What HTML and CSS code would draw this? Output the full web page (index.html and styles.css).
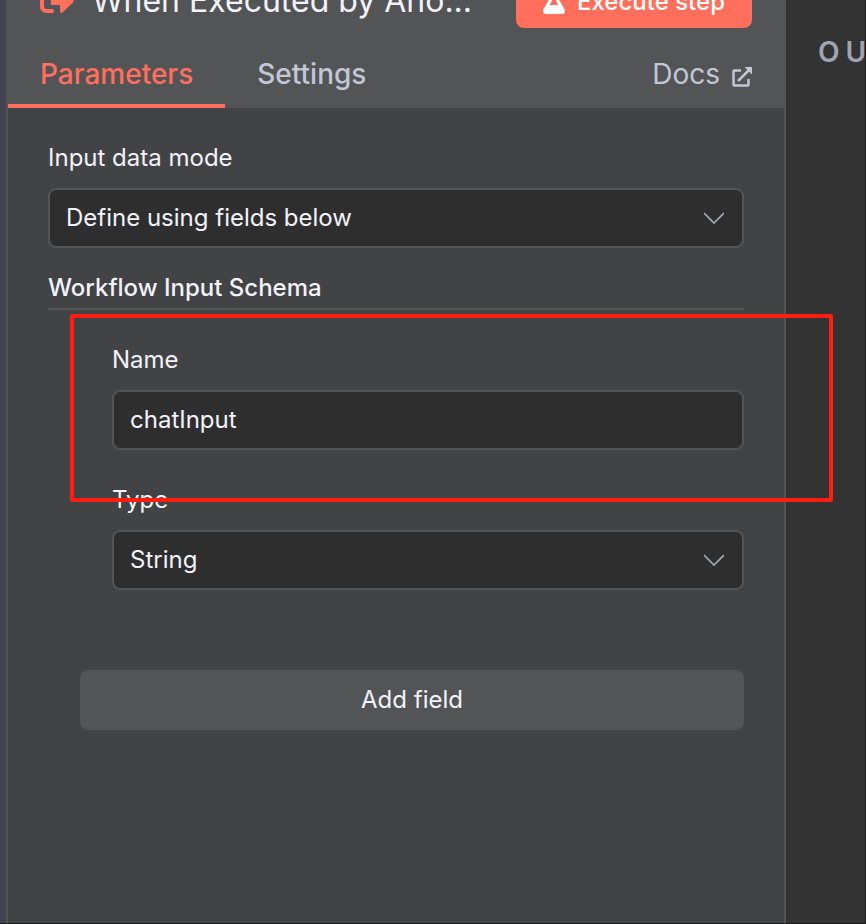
FILE: index.html
```html
<!DOCTYPE html>
<html lang="en">
<head>
    <meta charset="UTF-8">
    <meta name="viewport" content="width=device-width, initial-scale=1.0">
    <title>When Executed by Another Workflow</title>
    <link rel="stylesheet" href="styles.css">
</head>
<body>
    <div class="editor">
        <!-- Node settings -->
        <main class="panel">
            <header class="panel-header">
                <div class="title-row">
                    <svg class="node-icon" viewBox="0 0 34 24" aria-hidden="true">
                        <path d="M12 2H7Q2 2 2 7V17Q2 22 7 22H12" fill="none" stroke="currentColor" stroke-width="4" stroke-linecap="round"/>
                        <path d="M12 7H20V1Q20 -2 22.500 0L33 10.500Q34.500 12 33 13.500L22.500 23.500Q20 25 20 22V16H12Q11 16 11 15V8Q11 7 12 7Z" fill="currentColor"/>
                    </svg>
                    <h1 class="title">When Executed by Ano...</h1>
                    <button class="execute-button" type="button">
                        <svg class="flask-icon" viewBox="0 0 22 26" aria-hidden="true">
                            <path fill="currentColor" fill-rule="evenodd" d="M5 0H17V3H15V10L21.500 21Q23 26 19 26H3Q-1 26 .5 21L7 10V3H5ZM10 10L7 17H15L12 10Z"/>
                        </svg>
                        Execute step
                    </button>
                </div>
                <nav class="tabs">
                    <a class="tab active" href="#parameters">Parameters</a>
                    <a class="tab" href="#settings">Settings</a>
                    <a class="tab docs" href="#docs">Docs
                        <svg class="link-icon" viewBox="0 0 20 20" aria-hidden="true">
                            <path d="M9 3.500H2.500Q1.500 3.500 1.500 4.500V17.500Q1.500 18.500 2.500 18.500H15.500Q16.500 18.500 16.500 17.500V12M6 14L17 3" fill="none" stroke="currentColor" stroke-width="2.500"/>
                            <path d="M12.500 0H20V7.500Z" fill="currentColor"/>
                        </svg>
                    </a>
                </nav>
            </header>

            <form class="parameters" id="parameters">
                <div class="field">
                    <label for="mode">Input data mode</label>
                    <div class="select">
                        <select id="mode">
                            <option>Define using fields below</option>
                        </select>
                        <svg class="chevron" viewBox="0 0 20 12" aria-hidden="true"><path d="M0 1L10 11L20 1"/></svg>
                    </div>
                </div>

                <h2 class="section-title">Workflow Input Schema</h2>

                <div class="schema">
                    <div class="field">
                        <label for="name">Name</label>
                        <input id="name" type="text" value="chatInput">
                    </div>
                    <div class="field">
                        <label for="type">Type</label>
                        <div class="select">
                            <select id="type">
                                <option>String</option>
                            </select>
                            <svg class="chevron" viewBox="0 0 20 12" aria-hidden="true"><path d="M0 1L10 11L20 1"/></svg>
                        </div>
                    </div>
                </div>

                <button class="add-button" type="button">Add field</button>
            </form>
        </main>

        <!-- Output -->
        <aside class="output">
            <h2 class="output-title">OUTPUT</h2>
        </aside>

        <div class="highlight"></div>
    </div>
</body>
</html>
```
FILE: styles.css
```css
/* General Reset */
* {
    margin: 0;
    padding: 0;
    box-sizing: border-box;
}

body {
    background-color: #434250;
    color: #f2f2fa;
    font-family: Inter, "Liberation Sans", sans-serif;
    font-size: 24px;
    line-height: 32px;
}

.editor {
    position: relative;
    display: flex;
    min-height: 100vh;
    padding-left: 6px;
    border-right: 1px solid #1c1c1d;
    border-bottom: 1px solid #1c1c1d;
    overflow: hidden;
}

/* Panel */
.panel {
    flex: 1;
    min-width: 0;
    background: #424345;
    border-left: 2px solid #535456;
    border-right: 2px solid #535456;
}

.panel-header {
    display: flex;
    flex-direction: column;
    justify-content: flex-end;
    height: 108px;
    background: #535456;
    overflow: hidden;
}

.title-row {
    display: flex;
    flex-shrink: 0;
    align-items: center;
    height: 54px;
    margin-bottom: 12px;
    padding: 0 32px;
}

.node-icon {
    flex-shrink: 0;
    width: 34px;
    height: 24px;
    margin-right: 18px;
    color: #ff6f5c;
}

.title {
    flex: 1;
    font-size: 32px;
    font-weight: 400;
    white-space: nowrap;
}

.execute-button {
    display: flex;
    align-items: center;
    justify-content: center;
    gap: 12px;
    width: 236px;
    height: 54px;
    border: none;
    border-radius: 8px;
    background: #ff6f5c;
    color: #fff;
    font: 500 24px Inter, "Liberation Sans", sans-serif;
}

.flask-icon {
    width: 22px;
    height: 26px;
}

/* Tabs */
.tabs {
    display: flex;
    flex-shrink: 0;
    height: 68px;
    font-size: 28px;
    font-weight: 500;
}

.tab {
    height: 68px;
    padding: 18px 32px;
    color: #c2c7d6;
    text-decoration: none;
}

.tab.active {
    color: #ff6f5c;
    border-bottom: 4px solid #ff6f5c;
}

.docs {
    display: flex;
    gap: 12px;
    margin-left: auto;
    font-weight: 400;
}

.link-icon {
    width: 20px;
    height: 20px;
    margin-top: 9px;
}

/* Parameters */
.parameters {
    padding: 34px 40px;
}

.field label {
    display: block;
    margin-bottom: 14px;
}

input,
select {
    width: 100%;
    height: 60px;
    padding: 0 16px 2px;
    border: 2px solid #535456;
    border-radius: 8px;
    background: #2e2e2e;
    color: #f2f2fa;
    font: 24px Inter, "Liberation Sans", sans-serif;
    appearance: none;
}

.select {
    display: grid;
    align-items: center;
}

.select > * {
    grid-area: 1 / 1;
}

.chevron {
    justify-self: end;
    width: 20px;
    height: 12px;
    margin-right: 20px;
    fill: none;
    stroke: #a5a9b8;
    stroke-width: 1.7;
    pointer-events: none;
}

.section-title {
    margin: 24px 0 34px;
    padding-bottom: 4px;
    border-bottom: 2px solid #535456;
    font-size: 24px;
    font-weight: 500;
}

.schema {
    display: grid;
    gap: 34px;
    padding-left: 64px;
}

.add-button {
    display: block;
    width: calc(100% - 32px);
    height: 60px;
    margin: 80px 0 0 32px;
    padding-bottom: 2px;
    border: none;
    border-radius: 8px;
    background: #535456;
    color: #f2f2fa;
    font: 24px Inter, "Liberation Sans", sans-serif;
}

/* Output */
.output {
    width: 79px;
    padding: 36px 0 0 32px;
    background: #333;
    overflow: hidden;
}

.output-title {
    color: #a0a5b2;
    font-size: 28px;
    font-weight: 600;
    letter-spacing: 6px;
}

/* Outline drawn over the name field */
.highlight {
    position: absolute;
    top: 314px;
    left: 70px;
    right: 32px;
    height: 188px;
    border: 4px solid #ff1e10;
    border-radius: 2px;
    pointer-events: none;
}
```
